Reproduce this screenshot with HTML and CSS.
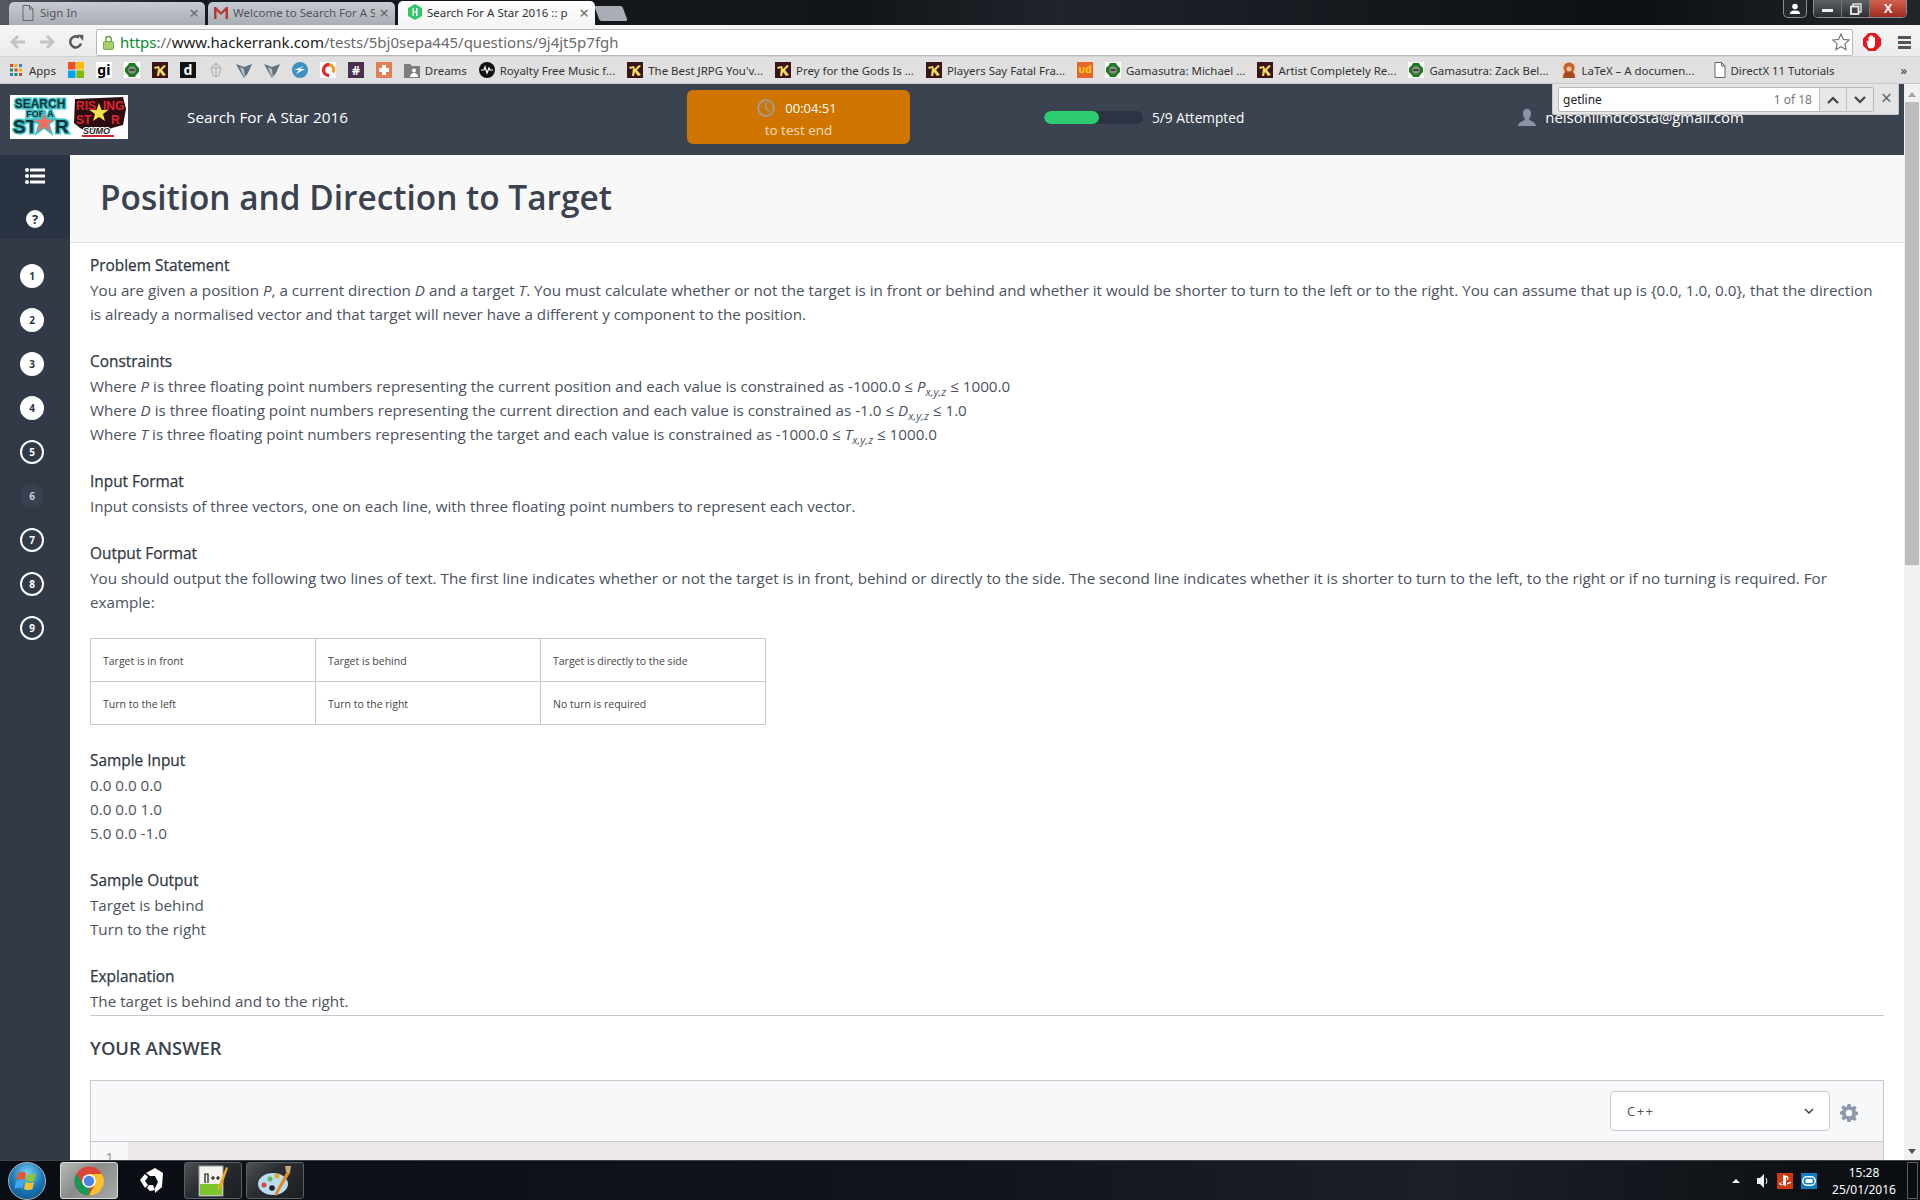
FILE: index.html
```html
<!DOCTYPE html>
<html>

<head>
	<title>Search For A Star 2016</title>
	<meta charset="utf-8" />
	<link rel="stylesheet" href="styles.css">
</head>

<body>
	<svg class="defs" width="0" height="0">
		<symbol id="k" viewBox="0 0 16 16">
			<rect width="16" height="16" fill="#3a1518" />
			<path d="M2 5l5-1 1 3 4-4 2 1-4 4 4 5-3 1-3-4-1 4H5l1-8-3 1z" fill="#f3dc5a" />
		</symbol>
		<symbol id="gem" viewBox="0 0 16 16">
			<rect width="16" height="16" fill="#fff" />
			<path d="M5 1h6l1 2 3 3v4l-3 3-1 2H5l-1-2-3-3V6l3-3z" fill="#1f7a1f" />
			<circle cx="8" cy="8" r="3.800" fill="#8a8f8a" />
			<rect x="5.500" y="7" width="5" height="2" fill="#444" />
		</symbol>
		<symbol id="dart" viewBox="0 0 16 16">
			<path d="M0 2l8 3 8-3-4 9-4 5-3-5z" fill="#5d7080" />
			<path d="M4 5l4 2 1 9-3-5z" fill="#b4c0ca" />
		</symbol>
		<symbol id="page" viewBox="0 0 12 16">
			<path d="M1 .5h6.500L11 4v11.500H1z M7.500 .5V4H11" fill="#fff" stroke="#666" stroke-width="1" />
		</symbol>
	</svg>

	<div class="tabs">
		<div class="tab tab-first">
			<svg class="tab-icon" viewBox="0 0 12 16"><path d="M1 .5h6.500L11 4v11.500H1z M7.500 .5V4H11" fill="none" stroke="#666" stroke-width="1" /></svg>
			<span class="tab-title">Sign In</span>
			<span class="tab-close">×</span>
		</div>
		<div class="tab tab-second">
			<svg class="tab-icon" viewBox="0 0 16 16"><path d="M1 14V2h2l5 5 5-5h2v12h-2.500V6L8 10 3.500 6v8z" fill="#b23a2e" /></svg>
			<span class="tab-title">Welcome to Search For A S</span>
			<span class="tab-close">×</span>
		</div>
		<div class="tab tab-active">
			<svg class="tab-icon" viewBox="0 0 16 16"><path d="M8 0l7 4v8l-7 4-7-4V4z" fill="#2ec866" /><path d="M5.500 4v8h1.500V8.800h2V12h1.500V4H9v3.400H7V4z" fill="#fff" /></svg>
			<span class="tab-title">Search For A Star 2016 :: p</span>
			<span class="tab-close">×</span>
		</div>
		<div class="tab-new"></div>
		<div class="win-controls">
			<div class="win-profile">
				<svg width="12" height="12" viewBox="0 0 12 12"><circle cx="6" cy="3.500" r="2.800" fill="#fff" /><path d="M1 11c0-3 2-3.500 5-3.500s5 .5 5 3.500z" fill="#fff" /></svg>
			</div>
			<div class="win-group">
				<div class="win-btn win-min"><i></i></div>
				<div class="win-btn win-max">
					<svg width="12" height="12" viewBox="0 0 12 12"><path d="M3 3V1h8v8H9" fill="none" stroke="#ddd" stroke-width="1.500" /><rect x="1" y="3.500" width="7.500" height="7.500" fill="none" stroke="#eee" stroke-width="1.800" /></svg>
				</div>
				<div class="win-btn win-close">X</div>
			</div>
		</div>
	</div>

	<div class="toolbar">
		<svg class="nav-icon" viewBox="0 0 16 16"><path d="M8 2L2 8l6 6M2 8h13" fill="none" stroke="#c4c4c4" stroke-width="3" /></svg>
		<svg class="nav-icon" viewBox="0 0 16 16"><path d="M8 2l6 6-6 6M14 8H1" fill="none" stroke="#c4c4c4" stroke-width="3" /></svg>
		<svg class="nav-icon" viewBox="0 0 16 16"><path d="M13 9.500A5.500 5.500 0 1 1 11 3.500" fill="none" stroke="#5a5a5a" stroke-width="2.600" /><path d="M9.500 .5l6 .5-.5 6z" fill="#5a5a5a" /></svg>
		<div class="omnibox">
			<svg class="lock" viewBox="0 0 12 16"><path d="M3 7V4.500a3 3 0 0 1 6 0V7" fill="none" stroke="#6c9c3a" stroke-width="1.600" /><rect x=".5" y="7" width="11" height="8.500" rx="1" fill="#a8d070" stroke="#6c9c3a" /></svg>
			<span class="url"><span class="url-https">https</span><span class="url-grey">://</span><span class="url-host">www.hackerrank.com</span><span class="url-grey">/tests/5bj0sepa445/questions/9j4jt5p7fgh</span></span>
			<svg class="star" viewBox="0 0 18 18"><path d="M9 1l2.400 5.400 5.800.6-4.300 3.900 1.200 5.700L9 13.700l-5.100 2.900 1.200-5.700L.8 7l5.800-.6z" fill="#fff" stroke="#777" stroke-width="1.200" /></svg>
		</div>
		<svg class="opera" viewBox="0 0 18 18"><path d="M5.500 0h7L18 5.500v7L12.500 18h-7L0 12.500v-7z" fill="#e8141c" /><path d="M3.500 8c1-.5 1.500 0 2 1V4.500c0-1.200 1.400-1.200 1.500 0V3c0-1.300 1.600-1.300 1.700 0v.5c.2-1.200 1.700-1 1.700.2V5c.3-1 1.600-.8 1.600.3V11c0 3-1.500 4.500-4 4.500-2.200 0-3-1.200-3.500-2.700z" fill="#fff" /></svg>
		<div class="menu-icon"><i></i><i></i><i></i></div>
	</div>

	<div class="bookmarks">
		<div class="bm">
			<svg class="fav" viewBox="0 0 16 16"><g><rect x="2" y="2" width="3" height="3" fill="#d9443a" /><rect x="6.500" y="2" width="3" height="3" fill="#f4b400" /><rect x="11" y="2" width="3" height="3" fill="#3b7de0" /><rect x="2" y="6.500" width="3" height="3" fill="#0f9d58" /><rect x="6.500" y="6.500" width="3" height="3" fill="#d9443a" /><rect x="11" y="6.500" width="3" height="3" fill="#f4b400" /><rect x="2" y="11" width="3" height="3" fill="#3b7de0" /><rect x="6.500" y="11" width="3" height="3" fill="#0f9d58" /><rect x="11" y="11" width="3" height="3" fill="#d9443a" /></g></svg>
			<span>Apps</span>
		</div>
		<svg class="fav" viewBox="0 0 16 16"><rect width="7.500" height="7.500" fill="#f25022" /><rect x="8.500" width="7.500" height="7.500" fill="#ffb900" /><rect y="8.500" width="7.500" height="7.500" fill="#00a4ef" /><rect x="8.500" y="8.500" width="7.500" height="7.500" fill="#7fba00" /></svg>
		<span class="fav fav-text fav-gi">gi</span>
		<svg class="fav"><use href="#gem" /></svg>
		<svg class="fav"><use href="#k" /></svg>
		<span class="fav fav-text fav-d">d</span>
		<svg class="fav" viewBox="0 0 16 16"><path d="M8 1l5 5-2 7-3 2-3-2-2-7zM8 1v14M3 6h10" fill="none" stroke="#aaa" /></svg>
		<svg class="fav"><use href="#dart" /></svg>
		<svg class="fav"><use href="#dart" /></svg>
		<svg class="fav" viewBox="0 0 16 16"><circle cx="8" cy="8" r="8" fill="#3d8fc4" /><path d="M2 8l10-4-4 3 5 0-9 5 3-4z" fill="#fff" /></svg>
		<svg class="fav" viewBox="0 0 16 16"><rect width="16" height="16" fill="#fff" /><path d="M9 2.500a5.500 5.500 0 0 1 4 8" fill="none" stroke="#f59b1c" stroke-width="3" /><path d="M9 2.500a5.500 5.500 0 1 0 0 11" fill="none" stroke="#e8242c" stroke-width="3.400" /></svg>
		<span class="fav fav-text fav-hash">#</span>
		<svg class="fav" viewBox="0 0 16 16"><rect width="16" height="16" fill="#e47f55" /><path d="M6 3h4v3h3v4h-3v3H6v-3H3V6h3z" fill="#fff" /></svg>
		<div class="bm">
			<svg class="fav" viewBox="0 0 16 16"><path d="M0 2h6l2 2h8v12H0z" fill="#7d7d7d" /><circle cx="10" cy="8.500" r="2" fill="#fff" /><path d="M6 15c0-3 2-4 4-4s4 1 4 4z" fill="#fff" /></svg>
			<span>Dreams</span>
		</div>
		<div class="bm">
			<svg class="fav" viewBox="0 0 16 16"><circle cx="8" cy="8" r="8" fill="#111" /><path d="M2 8h3l1-3 2 6 2-5 1 2h3" fill="none" stroke="#fff" stroke-width="1.200" /></svg>
			<span>Royalty Free Music f...</span>
		</div>
		<div class="bm"><svg class="fav"><use href="#k" /></svg><span>The Best JRPG You'v...</span></div>
		<div class="bm"><svg class="fav"><use href="#k" /></svg><span>Prey for the Gods Is ...</span></div>
		<div class="bm"><svg class="fav"><use href="#k" /></svg><span>Players Say Fatal Fra...</span></div>
		<span class="fav fav-text fav-ud">ud</span>
		<div class="bm"><svg class="fav"><use href="#gem" /></svg><span>Gamasutra: Michael ...</span></div>
		<div class="bm"><svg class="fav"><use href="#k" /></svg><span>Artist Completely Re...</span></div>
		<div class="bm"><svg class="fav"><use href="#gem" /></svg><span>Gamasutra: Zack Bel...</span></div>
		<div class="bm">
			<svg class="fav" viewBox="0 0 16 16"><rect width="16" height="16" fill="#e8d8c8" /><circle cx="8" cy="6" r="5.500" fill="#c4602a" /><path d="M2 16c0-5 2-7 6-7s6 2 6 7z" fill="#a84a20" /><circle cx="8" cy="7" r="2.500" fill="#f0c8a0" /></svg>
			<span>LaTeX – A documen...</span>
		</div>
		<div class="bm bm-doc"><svg class="fav-page" viewBox="0 0 12 16"><use href="#page" /></svg><span>DirectX 11 Tutorials</span></div>
		<span class="bm-more">»</span>
	</div>

	<div class="window">
		<div class="page">
			<header class="app-header">
				<div class="logo">
					<svg width="118" height="44" viewBox="0 0 118 44">
						<rect width="118" height="44" fill="#fff" />
						<g class="logo-left">
							<text x="30" y="13" class="logo-a">SEARCH</text>
							<text x="30" y="22" class="logo-b">FOR A</text>
							<text x="3" y="38" class="logo-c">ST</text>
							<text x="45" y="38" class="logo-c">R</text>
						</g>
						<path d="M34 16l3 8 9 0-7 5 3 10-8-6-8 6 3-10-7-5 9 0z" fill="#f2705f" stroke="#3cc0c4" stroke-width="1.500" />
						<path d="M65 4l48-2 3 12-3 16-11 3-4 2H74l-4-2-6-5z" fill="#2a0d10" />
						<g class="logo-right">
							<text x="66" y="15" class="logo-d">RIS</text>
							<text x="93" y="15" class="logo-d">ING</text>
							<text x="66" y="29" class="logo-d">ST</text>
							<text x="101" y="29" class="logo-d">R</text>
						</g>
						<path d="M89 8l2.500 7h7l-5.500 4 2 7-6-4-6 4 2-7-5.500-4h7z" fill="#f3e04a" />
						<text x="73" y="39" class="logo-e">SUMO</text>
						<rect x="72" y="40" width="32" height="2" fill="#c8242c" />
					</svg>
				</div>
				<div class="app-title">Search For A Star 2016</div>
				<div class="timer">
					<div class="timer-top">
						<svg width="18" height="18" viewBox="0 0 18 18"><circle cx="9" cy="9" r="7.800" fill="none" stroke="#9aa0a8" stroke-width="1.800" /><path d="M9 3.500V9l3 3.500" fill="none" stroke="#9aa0a8" stroke-width="1.500" /></svg>
						<span>00:04:51</span>
					</div>
					<div class="timer-sub">to test end</div>
				</div>
				<div class="attempts">
					<div class="progress"><div class="progress-fill"></div></div>
					<span>5/9 Attempted</span>
				</div>
				<div class="user">
					<svg width="18" height="17" viewBox="0 0 18 17"><path d="M9 0c3 0 4 2 4 4.500S12 9 11 10c0 2 6 2 7 7H0c1-5 7-5 7-7-1-1-2-3-2-5.500S6 0 9 0z" fill="#8a92a3" /></svg>
					<span>nelsonlimdcosta@gmail.com</span>
				</div>
			</header>

			<div class="main">
				<nav class="sidebar">
					<div class="side-top">
						<svg width="20" height="16" viewBox="0 0 20 16"><g fill="#fff"><circle cx="2" cy="2" r="2" /><circle cx="2" cy="8" r="2" /><circle cx="2" cy="14" r="2" /><rect x="5" y=".5" width="15" height="3" /><rect x="5" y="6.500" width="15" height="3" /><rect x="5" y="12.500" width="15" height="3" /></g></svg>
						<div class="help">?</div>
					</div>
					<div class="side-list">
						<div class="q q-done">1</div>
						<div class="q q-done">2</div>
						<div class="q q-done">3</div>
						<div class="q q-done">4</div>
						<div class="q">5</div>
						<div class="q q-current">6</div>
						<div class="q">7</div>
						<div class="q">8</div>
						<div class="q">9</div>
					</div>
				</nav>

				<div class="content">
					<h1 class="page-title">Position and Direction to Target</h1>
					<div class="problem">
						<div class="sect">
							<div class="sect-head">Problem Statement</div>
							You are given a position <i>P</i>, a current direction <i>D</i> and a target <i>T</i>. You must calculate whether or not the target is in front or behind and whether it would be shorter to turn to the left or to the right. You can assume that up is {0.0, 1.0, 0.0}, that the direction<br>
							is already a normalised vector and that target will never have a different y component to the position.
						</div>
						<div class="sect">
							<div class="sect-head">Constraints</div>
							Where <i>P</i> is three floating point numbers representing the current position and each value is constrained as -1000.0 ≤ <i>P<sub>x,y,z</sub></i> ≤ 1000.0<br>
							Where <i>D</i> is three floating point numbers representing the current direction and each value is constrained as -1.0 ≤ <i>D<sub>x,y,z</sub></i> ≤ 1.0<br>
							Where <i>T</i> is three floating point numbers representing the target and each value is constrained as -1000.0 ≤ <i>T<sub>x,y,z</sub></i> ≤ 1000.0
						</div>
						<div class="sect">
							<div class="sect-head">Input Format</div>
							Input consists of three vectors, one on each line, with three floating point numbers to represent each vector.
						</div>
						<div class="sect">
							<div class="sect-head">Output Format</div>
							You should output the following two lines of text. The first line indicates whether or not the target is in front, behind or directly to the side. The second line indicates whether it is shorter to turn to the left, to the right or if no turning is required. For<br>
							example:
						</div>
						<table class="cases">
							<tr><td>Target is in front</td><td>Target is behind</td><td>Target is directly to the side</td></tr>
							<tr><td>Turn to the left</td><td>Turn to the right</td><td>No turn is required</td></tr>
						</table>
						<div class="sect">
							<div class="sect-head">Sample Input</div>
							0.0 0.0 0.0<br>0.0 0.0 1.0<br>5.0 0.0 -1.0
						</div>
						<div class="sect">
							<div class="sect-head">Sample Output</div>
							Target is behind<br>Turn to the right
						</div>
						<div class="sect sect-last">
							<div class="sect-head">Explanation</div>
							The target is behind and to the right.
						</div>
						<hr class="rule">
						<h2 class="answer-head">YOUR ANSWER</h2>
						<div class="editor">
							<div class="editor-bar">
								<div class="lang">
									<span>C++</span>
									<svg width="10" height="6" viewBox="0 0 10 6"><path d="M1 1l4 4 4-4" fill="none" stroke="#39424e" stroke-width="1.500" /></svg>
								</div>
								<svg class="gear" width="18" height="18" viewBox="0 0 18 18"><path d="M7.500 0h3l.5 2.500 1.500.6L14.600 1.700l2.100 2.100-1.400 2.100.6 1.500 2.500.5v3l-2.500.5-.6 1.500 1.400 2.100-2.100 2.100-2.100-1.400-1.500.6-.5 2.500h-3L7 15.600l-1.500-.6-2.100 1.400-2.100-2.100 1.400-2.100-.6-1.500L0 10.500v-3l2.100-.5.6-1.500-1.400-2.100 2.100-2.100 2.100 1.400L7 2.500z" fill="#8f99ab" /><circle cx="9" cy="9" r="3.200" fill="#fff" /></svg>
							</div>
							<div class="code-row">
								<div class="gutter">1</div>
								<div class="code-line"></div>
							</div>
						</div>
					</div>
				</div>
			</div>
		</div>

		<div class="scrollbar">
			<div class="scroll-up"></div>
			<div class="scroll-thumb"></div>
			<div class="scroll-down"></div>
		</div>

		<div class="findbar">
			<div class="find-box">
				<span class="find-text">getline</span>
				<span class="find-count">1 of 18</span>
				<div class="find-btn"><svg width="12" height="8" viewBox="0 0 12 8"><path d="M1 7l5-5 5 5" fill="none" stroke="#444" stroke-width="2.200" /></svg></div>
				<div class="find-btn"><svg width="12" height="8" viewBox="0 0 12 8"><path d="M1 1l5 5 5-5" fill="none" stroke="#444" stroke-width="2.200" /></svg></div>
			</div>
			<span class="find-close">×</span>
		</div>
	</div>

	<footer class="taskbar">
		<svg class="orb" width="38" height="38" viewBox="0 0 38 38">
			<defs><radialGradient id="orbg" cx="50%" cy="30%" r="70%"><stop offset="0" stop-color="#7fd4f5" /><stop offset=".6" stop-color="#1c78b8" /><stop offset="1" stop-color="#0e5c94" /></radialGradient></defs>
			<circle cx="19" cy="19" r="18.500" fill="url(#orbg)" stroke="#a8b4bc" />
			<path d="M10 11q4-2 8 0l-1.500 7q-4-2-8 0z" fill="#e8562a" />
			<path d="M19.500 11.500q4 2 8.500 0l-1.500 7q-4 2-8.500 0z" fill="#8cc63f" />
			<path d="M8 19.500q4-2 8 0l-1.500 7q-4-2-8 0z" fill="#3fa9f5" />
			<path d="M17.500 20q4 2 8.500 0l-1.500 7q-4 2-8.500 0z" fill="#fbc02d" />
		</svg>
		<div class="task task-on">
			<svg width="30" height="30" viewBox="0 0 30 30">
				<circle cx="15" cy="15" r="14.500" fill="#db4437" />
				<path d="M15 15L2.500 22A14.500 14.500 0 0 0 15 29.500z" fill="#0f9d58" />
				<path d="M2.500 7.500A14.500 14.500 0 0 0 2.500 22L9 18.500z" fill="#0f9d58" />
				<path d="M15 8h13a14.500 14.500 0 0 1-13 21.500L21 18z" fill="#fbc02d" />
				<circle cx="15" cy="15" r="6.800" fill="#fff" />
				<circle cx="15" cy="15" r="5.200" fill="#4a86e8" />
			</svg>
		</div>
		<div class="task task-plain">
			<svg width="26" height="26" viewBox="0 0 26 26"><path d="M17 0l8 5-1 14-7 6 0-5 3-6-3-6-5 0-4-3zM2 12l5-6 3 3-3 4 3 4-3 3zM9 20l2-3h4l2 5-5 1z" fill="#fff" /></svg>
		</div>
		<div class="task">
			<svg width="30" height="32" viewBox="0 0 30 32">
				<rect x="1" y="1" width="24" height="30" fill="#f4f4ec" stroke="#999" />
				<rect x="2" y="19" width="22" height="11" fill="#7cc52a" />
				<path d="M7 18V9h3v9M13 13h4M15 11v4M18 13h4M20 11v4" fill="none" stroke="#111" stroke-width="1.200" />
				<path d="M28 2l2 1-7 20-3 3 0-4z" fill="#f0a81c" />
			</svg>
		</div>
		<div class="task">
			<svg width="34" height="32" viewBox="0 0 34 32">
				<ellipse cx="15" cy="19" rx="15" ry="11" fill="#b8dcf0" />
				<circle cx="6" cy="20" r="2.500" fill="#d9443a" />
				<circle cx="12" cy="14" r="2.500" fill="#5cb85c" />
				<circle cx="19" cy="11" r="2.500" fill="#f0a81c" />
				<circle cx="14" cy="23" r="2.800" fill="#222" />
				<path d="M29 6l3 2-13 22-2 1 0-3z" fill="#e08a20" />
				<path d="M27 1h6l-1 7-4-1z" fill="#c8a878" />
			</svg>
		</div>
		<div class="tray">
			<span class="tray-arrow"></span>
			<svg width="12" height="14" viewBox="0 0 12 14"><path d="M0 4h3l4-4v14l-4-4H0z" fill="#eee" /><path d="M9 4q2 3 0 6" fill="none" stroke="#eee" /></svg>
			<div class="tray-ps">
				<svg width="12" height="11" viewBox="0 0 12 11"><path d="M4 0l4 1c2 .5 2 4 0 4V2.500H7V11L4 10zM3.500 7.500l-2.500 1L3.500 9.500v1L0 9.200c-.5-.7 0-1.200 3.500-2.200zM8 8l4-1.200V8l-4 1.500z" fill="#fff" /></svg>
			</div>
			<div class="tray-vita">
				<svg width="14" height="10" viewBox="0 0 14 10"><rect x=".8" y=".8" width="12.400" height="8.400" rx="4" fill="none" stroke="#fff" stroke-width="1.500" /><rect x="3.500" y="3" width="7" height="4" fill="#fff" /></svg>
			</div>
			<div class="clock">
				<div>15:28</div>
				<div>25/01/2016</div>
			</div>
			<div class="show-desktop"></div>
		</div>
	</footer>
</body>
</html>
```

FILE: styles.css
```css
html, body {
	margin: 0;
	height: 1200px;
	overflow: hidden;
}

body {
	display: flex;
	flex-direction: column;
	font-family: "Open Sans", sans-serif;
	color: #39424e;
	background: #fff;
}

.defs {
	position: absolute;
}

/* browser chrome */
.tabs {
	height: 25px;
	flex: none;
	display: flex;
	align-items: flex-end;
	padding-left: 9px;
	background: linear-gradient(90deg, #55595e 0, #16191e 10%, #12161b 45%, #1f242a 55%, #0c0f14 85%, #22262b 100%);
	font: 11.500px "Noto Sans", sans-serif;
}

.tab {
	height: 23px;
	display: flex;
	align-items: center;
	box-sizing: border-box;
	background: linear-gradient(#c6cbd3, #a9aeb6);
	border-radius: 5px 5px 0 0;
	color: #555;
	margin-right: 3px;
	padding: 0 6px 2px;
}

.tab-first {
	width: 196px;
	padding-left: 11px;
}

.tab-second {
	width: 187px;
	padding-left: 5px;
}

.tab-active {
	width: 197px;
	height: 24px;
	padding-left: 9px;
	background: linear-gradient(#fff, #f4f4f4);
	color: #333;
	margin-right: 2px;
}

.tab-icon {
	width: 16px;
	height: 16px;
	margin-right: 4px;
	flex: none;
}

.tab-title {
	flex: 1;
	overflow: hidden;
	white-space: nowrap;
}

.tab-close {
	font-size: 17px;
	line-height: 1;
	color: #666;
	margin-left: 4px;
}

.tab-new {
	width: 28px;
	height: 15px;
	margin-bottom: 4px;
	background: #a9aeb6;
	transform: skewX(20deg);
	border-radius: 2px;
}

.win-controls {
	margin-left: auto;
	margin-right: 13px;
	align-self: flex-start;
	display: flex;
	gap: 6px;
}

.win-profile {
	width: 24px;
	height: 18px;
	box-sizing: border-box;
	border: 1px solid #8a8d92;
	border-top: 0;
	border-radius: 0 0 5px 5px;
	background: #25282d;
	display: flex;
	align-items: center;
	justify-content: center;
}

.win-group {
	display: flex;
	height: 18px;
	border: 1px solid #8a8d92;
	border-top: 0;
	border-radius: 0 0 5px 5px;
	overflow: hidden;
	box-sizing: border-box;
	width: 94px;
}

.win-btn {
	display: flex;
	align-items: center;
	justify-content: center;
	background: linear-gradient(#5d6065, #2b2e33);
	border-right: 1px solid #777;
	width: 27px;
}

.win-min i {
	width: 11px;
	height: 3px;
	margin-top: 4px;
	background: #eee;
}

.win-close {
	flex: 1;
	border-right: 0;
	background: linear-gradient(#d0604f, #a02c20);
	color: #fff;
	font: bold 13px "Liberation Sans", sans-serif;
}

.toolbar {
	height: 31px;
	flex: none;
	display: flex;
	align-items: center;
	box-sizing: border-box;
	padding: 3px 9px 0 10px;
	background: linear-gradient(#f6f6f6, #ebebeb);
}

.nav-icon {
	width: 16px;
	height: 16px;
	margin-right: 13px;
	flex: none;
}

.omnibox {
	flex: none;
	margin-left: -1px;
	width: 1757px;
	height: 27px;
	box-sizing: border-box;
	display: flex;
	align-items: center;
	background: #fff;
	border: 1px solid #b9b9b9;
	border-radius: 2px;
	padding: 0 2px 0 6px;
}

.lock {
	width: 11px;
	height: 15px;
	margin-right: 6px;
}

.url {
	font: 15px "Noto Sans", sans-serif;
	white-space: nowrap;
}

.url-https {
	color: #0a8a2c;
}

.url-grey {
	color: #6a6a6a;
}

.url-host {
	color: #222;
}

.star {
	margin-left: auto;
	width: 18px;
	height: 18px;
}

.opera {
	width: 18px;
	height: 18px;
	margin-left: 10px;
}

.menu-icon {
	margin-left: auto;
	width: 13px;
	display: flex;
	flex-direction: column;
	gap: 2px;
}

.menu-icon i {
	height: 3px;
	background: #555;
}

.bookmarks {
	height: 28px;
	flex: none;
	display: flex;
	align-items: center;
	gap: 12px;
	box-sizing: border-box;
	padding: 0 8px;
	background: #e0e0e0;
	border-top: 1px solid #d2d2d2;
	border-bottom: 1px solid #c8c8c8;
	font: 11.450px "Noto Sans", sans-serif;
	color: #333;
	white-space: nowrap;
}

.bm {
	display: flex;
	align-items: center;
	gap: 5px;
	flex: none;
}

.bm-doc {
	margin-left: 7px;
}

.fav {
	width: 16px;
	height: 16px;
	flex: none;
}

.fav-page {
	width: 12px;
	height: 16px;
}

.fav-text {
	display: block;
	text-align: center;
	font-weight: bold;
	line-height: 16px;
}

.fav-gi {
	color: #000;
	background: #fff;
	font-size: 14px;
}

.fav-d {
	color: #fff;
	background: #111;
	font-size: 14px;
}

.fav-hash {
	color: #fff;
	background: #4a2f4e;
	font-size: 13px;
}

.fav-ud {
	color: #ffd21f;
	background: #e8662a;
	font: bold 11px "Liberation Mono", monospace;
	line-height: 16px;
}

.bm-more {
	margin-left: auto;
	margin-right: 5px;
	font-size: 13px;
}

/* page */
.window {
	flex: 1;
	min-height: 0;
	display: flex;
	position: relative;
}

.page {
	flex: 1;
	min-width: 0;
	display: flex;
	flex-direction: column;
}

.app-header {
	height: 71px;
	flex: none;
	box-sizing: border-box;
	padding-bottom: 5px;
	display: flex;
	align-items: center;
	background: #3b4250;
	color: #fff;
	font-size: 15.300px;
}

.logo {
	margin-left: 10px;
	height: 44px;
	width: 118px;
	flex: none;
}

.logo text {
	font-family: "Liberation Sans", sans-serif;
	font-weight: bold;
}

.logo-left text {
	fill: #12333a;
	stroke: #3cc0c4;
	stroke-width: 3px;
	paint-order: stroke;
}

.logo-a {
	font-size: 12px;
	text-anchor: middle;
}

.logo-b {
	font-size: 9px;
	text-anchor: middle;
}

.logo-c {
	font-size: 19px;
}

.logo-d {
	font-size: 12px;
	fill: #e02430;
}

.logo-e {
	font-size: 9px;
	font-style: italic;
	fill: #1a1a1a;
	stroke: #fff;
	stroke-width: 2px;
	paint-order: stroke;
}

.app-title {
	margin-left: 59px;
	width: 160px;
	flex: none;
	white-space: nowrap;
}

.timer {
	margin-left: 340px;
	width: 223px;
	height: 54px;
	flex: none;
	box-sizing: border-box;
	padding-top: 7px;
	background: #cf7500;
	border-radius: 6px;
	text-align: center;
	line-height: 22px;
	font-size: 13px;
}

.timer-top {
	display: flex;
	align-items: center;
	justify-content: center;
	gap: 10px;
	margin-right: 3px;
}

.timer-sub {
	font-size: 13.500px;
	color: #f0dcc4;
}

.attempts {
	margin-left: 134px;
	display: flex;
	align-items: center;
	gap: 9px;
	flex: none;
	font-size: 13.700px;
}

.progress {
	width: 99px;
	height: 13px;
	border-radius: 7px;
	background: #2c3444;
	overflow: hidden;
}

.progress-fill {
	width: 55px;
	height: 100%;
	border-radius: 7px;
	background: #2ecc71;
}

.user {
	margin-left: 274px;
	display: flex;
	align-items: center;
	gap: 9px;
	font-size: 14.900px;
	white-space: nowrap;
	flex: none;
}

.main {
	flex: 1;
	min-height: 0;
	display: flex;
}

.sidebar {
	width: 70px;
	flex: none;
	background: #333a47;
}

.side-top {
	height: 84px;
	box-sizing: border-box;
	padding-top: 13px;
	background: #2a3342;
	display: flex;
	flex-direction: column;
	align-items: center;
	gap: 26px;
}

.help {
	width: 18px;
	height: 18px;
	border-radius: 50%;
	background: #fff;
	color: #2a3342;
	font-size: 13px;
	font-weight: 700;
	line-height: 18px;
	text-align: center;
}

.side-list {
	display: flex;
	flex-direction: column;
	align-items: center;
	gap: 20px;
	padding: 25px 6px 0 0;
}

.q {
	width: 24px;
	height: 24px;
	box-sizing: border-box;
	border: 2px solid #fff;
	border-radius: 50%;
	color: #fff;
	font-size: 10px;
	font-weight: 700;
	line-height: 20px;
	text-align: center;
}

.q-done {
	background: #fff;
	color: #2a3342;
}

.q-current {
	border-color: #39414e;
	background: #39414e;
	color: #c9ced6;
}

.content {
	flex: 1;
	min-width: 0;
	overflow: hidden;
}

.page-title {
	margin: 0;
	height: 88px;
	box-sizing: border-box;
	padding: 19px 0 0 30px;
	background: #f8f8f8;
	border-bottom: 1px solid #dfe1e5;
	font-size: 33.400px;
	font-weight: 600;
	line-height: 46px;
	color: #39424e;
}

.problem {
	padding: 11px 20px 0 20px;
	font-size: 15.200px;
	line-height: 24px;
	color: #4b525d;
}

.sect {
	margin-bottom: 24px;
}

.sect-last {
	margin-bottom: 2px;
}

.sect-head {
	color: #2f3743;
	font-size: 15.400px;
	-webkit-text-stroke: .25px #2f3743;
}

sub {
	font-size: 11px;
	line-height: 0;
}

.cases {
	border-collapse: collapse;
	width: 676px;
	table-layout: fixed;
	margin-bottom: 24px;
	font-size: 10.500px;
	line-height: 16px;
}

.cases td {
	height: 43px;
	box-sizing: border-box;
	padding: 1px 12px 0;
	border: 1px solid #c5c8d1;
	color: #444;
}

.rule {
	margin: 0;
	border: 0;
	border-top: 1px solid #c5c8d1;
}

.answer-head {
	margin: 20px 0 20px;
	font-size: 18.400px;
	font-weight: 600;
	line-height: 24px;
	color: #39424e;
}

.editor {
	border: 1px solid #c5c8d1;
	border-bottom: 0;
}

.editor-bar {
	height: 61px;
	box-sizing: border-box;
	display: flex;
	align-items: center;
	justify-content: flex-end;
	gap: 10px;
	padding: 0 25px 0 0;
	background: #f7f8fa;
	border-bottom: 1px solid #c5c8d1;
}

.lang {
	width: 220px;
	height: 40px;
	box-sizing: border-box;
	display: flex;
	align-items: center;
	justify-content: space-between;
	padding: 0 15px 0 16px;
	background: #fff;
	border: 1px solid #c5c8d1;
	border-radius: 4px;
	font-size: 13px;
	letter-spacing: 1.500px;
}

.gear {
	margin-top: 4px;
}

.code-row {
	display: flex;
	height: 40px;
}

.gutter {
	width: 37px;
	box-sizing: border-box;
	text-align: center;
	background: #f7f8fa;
	color: #999;
	font-size: 15px;
	padding-top: 3px;
}

.code-line {
	flex: 1;
	background: #ece8e8;
}

/* scrollbar and find bar lie next to / over the page */
.scrollbar {
	width: 16px;
	flex: none;
	display: flex;
	flex-direction: column;
	background: #f1f1f1;
	box-sizing: border-box;
	padding-top: 8px;
}

.scroll-up {
	width: 0;
	margin: 0 auto;
	border: 4px solid transparent;
	border-top: 0;
	border-bottom: 5px solid #a3a3a3;
}

.scroll-thumb {
	height: 463px;
	margin: 5px 1px 0;
	background: #bcbcbc;
}

.scroll-down {
	margin: auto auto 6px;
	width: 0;
	border: 4px solid transparent;
	border-bottom: 0;
	border-top: 5px solid #505050;
}

.findbar {
	position: absolute;
	top: 0;
	left: 1552px;
	width: 347px;
	height: 31px;
	box-sizing: border-box;
	padding: 3px 0 0 5px;
	display: flex;
	background: #e4e4e4;
	border: 1px solid #c9c9c9;
	border-top: 0;
	border-radius: 0 0 2px 2px;
	font: 12px "Noto Sans", sans-serif;
}

.find-box {
	width: 316px;
	height: 25px;
	box-sizing: border-box;
	display: flex;
	align-items: center;
	background: #fff;
	border: 1px solid #b9b9b9;
	border-radius: 2px;
	padding-left: 4px;
}

.find-text {
	flex: 1;
	color: #222;
}

.find-count {
	color: #777;
	margin-right: 7px;
}

.find-btn {
	width: 27px;
	height: 100%;
	box-sizing: border-box;
	display: flex;
	align-items: center;
	justify-content: center;
	background: #e8e8e8;
	border-left: 1px solid #c0c0c0;
}

.find-close {
	margin-left: 7px;
	font-size: 19px;
	line-height: 22px;
	color: #666;
}

/* windows taskbar */
.taskbar {
	height: 40px;
	flex: none;
	display: flex;
	align-items: center;
	box-sizing: border-box;
	padding-left: 8px;
	background: linear-gradient(90deg, #0a0e14, #10151b 50%, #1a2026 75%, #0a0d12);
	border-top: 1px solid #3e4349;
	color: #fff;
}

.orb {
	flex: none;
	margin-right: 14px;
}

.task {
	width: 58px;
	height: 37px;
	box-sizing: border-box;
	margin-right: 4px;
	display: flex;
	align-items: center;
	justify-content: center;
	border: 1px solid #5a5f64;
	border-radius: 3px;
	background: linear-gradient(135deg, #4e5256, #2a2d31 40%, #1b1e22);
}

.task-on {
	background: linear-gradient(135deg, #b8baba, #8a8c8c 45%, #a8aaaa);
	border-color: #ddd;
}

.task-plain {
	background: none;
	border-color: transparent;
}

.tray {
	margin-left: auto;
	display: flex;
	align-items: center;
	height: 100%;
}

.tray-arrow {
	width: 0;
	border: 4px solid transparent;
	border-top: 0;
	border-bottom: 4px solid #fff;
	margin-right: 17px;
}

.tray-ps,
.tray-vita {
	width: 16px;
	height: 16px;
	margin-left: 8px;
	display: flex;
	align-items: center;
	justify-content: center;
	background: #d0390f;
}

.tray-vita {
	background: #0f7cc4;
}

.clock {
	width: 84px;
	text-align: center;
	font: 12px/17px "Noto Sans", sans-serif;
	margin-left: 5px;
}

.show-desktop {
	width: 11px;
	height: 37px;
	margin: 0 2px 0 1px;
	border: 1px solid #5a5f64;
	box-sizing: border-box;
}
```
